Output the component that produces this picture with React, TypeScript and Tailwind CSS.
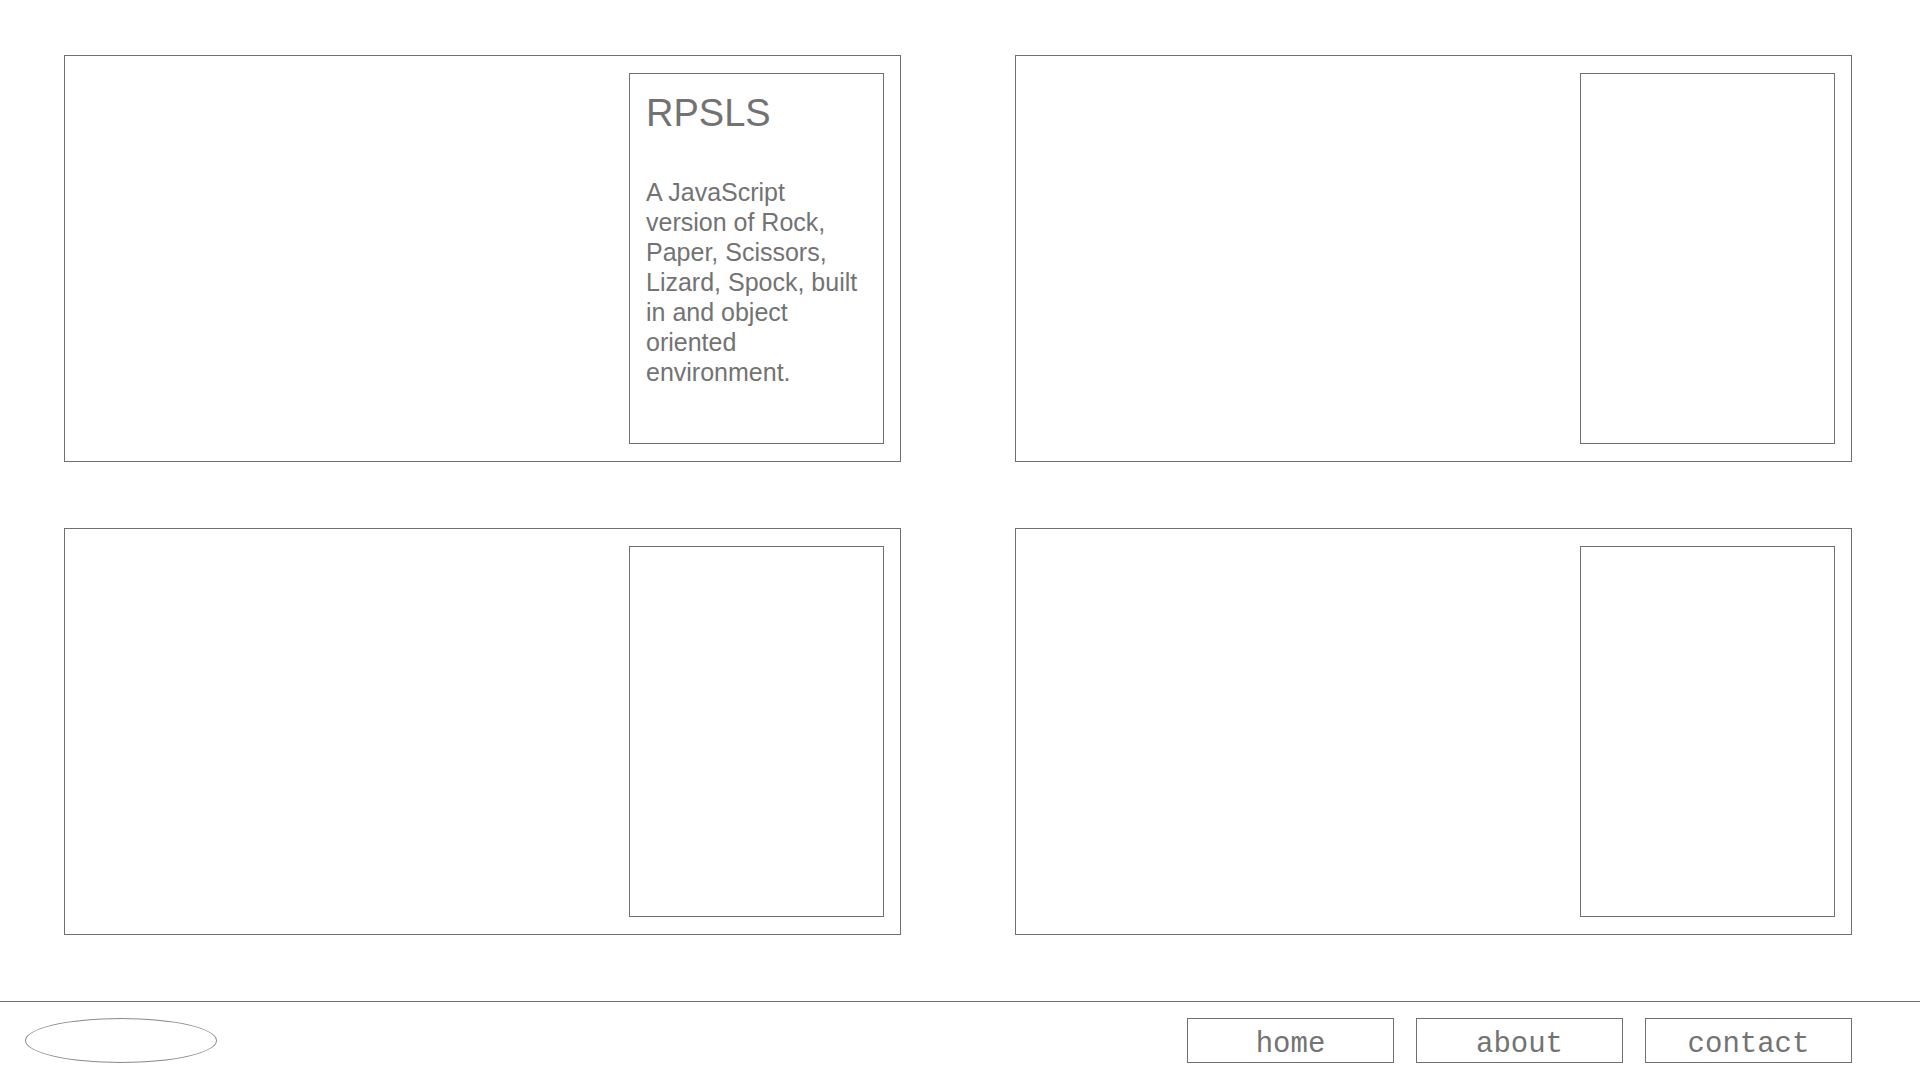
import React from 'react';

interface Project {
  id: number;
  title?: string;
  description?: string;
}

const projects: Project[] = [
  {
    id: 1,
    title: 'RPSLS',
    description:
      'A JavaScript version of Rock, Paper, Scissors, Lizard, Spock, built in and object oriented environment.',
  },
  { id: 2 },
  { id: 3 },
  { id: 4 },
];

const navItems = ['home', 'about', 'contact'];

const ProjectCard: React.FC<{ project: Project }> = ({ project }) => (
  <div className="w-[837px] h-[407px] border border-[#707070] flex justify-end pt-[17px] pb-[17px] pr-[16px]">
    <div className="w-[255px] h-full border border-[#707070] pl-4 pt-5">
      {project.title && (
        <h2 className="text-[38px] leading-[38px] text-[#727272] font-['Liberation_Sans',Arial,sans-serif]">
          {project.title}
        </h2>
      )}
      {project.description && (
        <p className="mt-[45px] w-[216px] text-[25px] leading-[30px] text-[#737373] font-['Liberation_Sans',Arial,sans-serif]">
          {project.description}
        </p>
      )}
    </div>
  </div>
);

const App: React.FC = () => {
  return (
    <div className="w-[1920px] h-[1080px] bg-white overflow-hidden flex flex-col">
      {/* Project grid */}
      <main className="pt-[55px] pl-[64px] grid grid-cols-[837px_837px] gap-x-[114px] gap-y-[66px]">
        {projects.map((p) => (
          <ProjectCard key={p.id} project={p} />
        ))}
      </main>

      {/* Footer nav */}
      <footer className="mt-[66px] border-t border-[#707070] pt-4 pl-[25px] pr-[68px] flex items-start justify-between">
        <div className="w-[192px] h-[45px] rounded-[50%] border border-[#8a8a8a]" />
        <nav className="flex gap-[22px]">
          {navItems.map((item) => (
            <button
              key={item}
              className="w-[207px] h-[45px] border border-[#707070] pt-[9px] text-center text-[29px] leading-[34px] text-[#737373] font-['Liberation_Mono','DejaVu_Sans_Mono',monospace]"
            >
              {item}
            </button>
          ))}
        </nav>
      </footer>
    </div>
  );
};

export default App;
